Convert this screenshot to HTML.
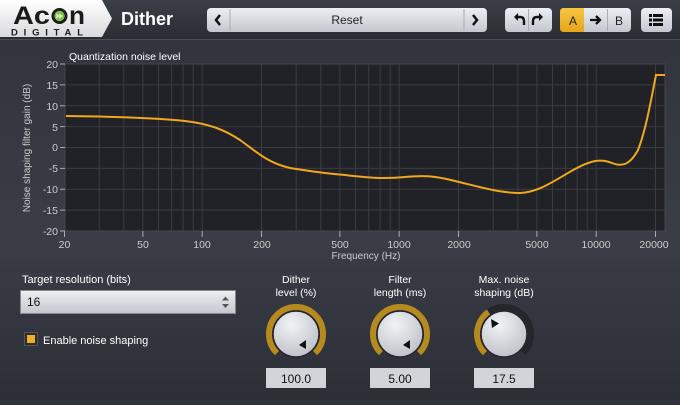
<!DOCTYPE html>
<html><head><meta charset="utf-8"><style>
body{margin:0;width:680px;height:400px;overflow:hidden;font-family:"Liberation Sans",sans-serif;background:linear-gradient(#30333b,#3a3d46 60%,#2c2f36);}
svg text{font-family:"Liberation Sans",sans-serif;}
</style></head><body>
<svg width="680" height="400" xmlns="http://www.w3.org/2000/svg">
<defs>
<linearGradient id="hdr" x1="0" y1="0" x2="0" y2="1"><stop offset="0" stop-color="#3b3e46"/><stop offset="1" stop-color="#2a2d34"/></linearGradient>
<linearGradient id="btn" x1="0" y1="0" x2="0" y2="1"><stop offset="0" stop-color="#eceef2"/><stop offset="1" stop-color="#c4c7ce"/></linearGradient>
<linearGradient id="gold" x1="0" y1="0" x2="0" y2="1"><stop offset="0" stop-color="#f7c542"/><stop offset="1" stop-color="#e6a51c"/></linearGradient>
<radialGradient id="knob" cx="0.4" cy="0.3" r="0.8"><stop offset="0" stop-color="#f2f3f6"/><stop offset="1" stop-color="#b9bcc4"/></radialGradient>
<linearGradient id="logo" x1="0" y1="0" x2="0" y2="1"><stop offset="0" stop-color="#ffffff"/><stop offset="1" stop-color="#d9dadc"/></linearGradient>
</defs>
<rect x="0" y="0" width="680" height="39" fill="url(#hdr)"/>
<rect x="0" y="39" width="680" height="1" fill="#4a4d55"/>
<path d="M0 0H102L112 18.5L102 37H0Z" fill="url(#logo)"/>
<text x="13" y="24" font-size="25" font-weight="bold" fill="#1b1b1b" textLength="37" lengthAdjust="spacingAndGlyphs">Ac</text>
<circle cx="59.5" cy="16" r="8" fill="#1b1b1b"/><circle cx="59.5" cy="16" r="5.2" fill="#7cc242"/>
<path d="M56.5 13.5L59.5 16L56.5 18.5ZM59.5 13.5L62.5 16L59.5 18.5Z" fill="#fff"/>
<text x="69" y="24" font-size="25" font-weight="bold" fill="#1b1b1b" textLength="16" lengthAdjust="spacingAndGlyphs">n</text>
<text x="11" y="35.5" font-size="9.5" font-weight="bold" fill="#1b1b1b" textLength="72" lengthAdjust="spacing">DIGITAL</text>
<text x="121" y="25" font-size="18" font-weight="bold" fill="#fff">Dither</text>
<rect x="207" y="8" width="280" height="24" rx="4" fill="url(#btn)"/>
<line x1="230" y1="9" x2="230" y2="31" stroke="#a9acb3"/><line x1="464" y1="9" x2="464" y2="31" stroke="#a9acb3"/>
<path d="M220 15L216 20L220 25" stroke="#111" stroke-width="2.5" fill="none"/>
<path d="M473 15L477 20L473 25" stroke="#111" stroke-width="2.5" fill="none"/>
<text x="347" y="24" font-size="12" fill="#222" text-anchor="middle">Reset</text>
<rect x="505" y="8" width="47" height="24" rx="4" fill="url(#btn)"/>
<line x1="528.5" y1="9" x2="528.5" y2="31" stroke="#a9acb3"/>
<path d="M514 17L518 13V21Z" fill="#111"/><path d="M516 17H520Q524 17 524 21V25" stroke="#111" stroke-width="2.4" fill="none"/>
<path d="M543 17L539 13V21Z" fill="#111"/><path d="M541 17H537Q533 17 533 21V25" stroke="#111" stroke-width="2.4" fill="none"/>
<rect x="560" y="8" width="71" height="24" rx="4" fill="url(#btn)"/>
<path d="M564 8H584V32H564Q560 32 560 28V12Q560 8 564 8Z" fill="url(#gold)"/>
<line x1="607.5" y1="9" x2="607.5" y2="31" stroke="#a9acb3"/>
<text x="573" y="25" font-size="12" fill="#222" text-anchor="middle">A</text>
<path d="M590 20H600M596 16L600 20L596 24" stroke="#111" stroke-width="2.3" fill="none"/>
<text x="619" y="25" font-size="12" fill="#222" text-anchor="middle">B</text>
<rect x="641" y="8" width="31" height="24" rx="4" fill="url(#btn)"/>
<g fill="#111"><rect x="649" y="14" width="3" height="3"/><rect x="653" y="14" width="10" height="3"/><rect x="649" y="18.5" width="3" height="3"/><rect x="653" y="18.5" width="10" height="3"/><rect x="649" y="23" width="3" height="3"/><rect x="653" y="23" width="10" height="3"/></g>

<text x="69" y="60" font-size="10.5" fill="#fff">Quantization noise level</text>
<rect x="65" y="64" width="600" height="167" fill="#212227" stroke="#45474e"/>
<g stroke="#3b3d43" stroke-width="1">
<path d="M65 84.9H665M65 105.8H665M65 126.6H665M65 147.5H665M65 168.4H665M65 189.3H665M65 210.1H665"/>
<path d="M99.2 64V231M123.8 64V231M142.9 64V231M158.5 64V231M171.7 64V231M183.1 64V231M193.2 64V231M202.2 64V231M261.5 64V231M296.2 64V231M320.8 64V231M339.9 64V231M355.5 64V231M368.7 64V231M380.1 64V231M390.2 64V231M399.2 64V231M458.5 64V231M493.2 64V231M517.8 64V231M536.9 64V231M552.5 64V231M565.7 64V231M577.1 64V231M587.2 64V231M596.2 64V231M655.5 64V231"/>
</g>
<g stroke="#aaa"><path d="M60 64H65M60 84.9H65M60 105.8H65M60 126.6H65M60 147.5H65M60 168.4H65M60 189.3H65M60 210.1H65M60 231H65"/>
<path d="M64.5 231V237M142.9 231V237M202.2 231V237M261.5 231V237M339.9 231V237M399.2 231V237M458.5 231V237M536.9 231V237M596.2 231V237M655.5 231V237"/></g>
<g font-size="10.5" fill="#ccc" text-anchor="end">
<text x="58" y="68">20</text><text x="58" y="89">15</text><text x="58" y="110">10</text><text x="58" y="131">5</text><text x="58" y="151">0</text><text x="58" y="172">-5</text><text x="58" y="193">-10</text><text x="58" y="214">-15</text><text x="58" y="235">-20</text></g>
<g font-size="10.5" fill="#ccc" text-anchor="middle">
<text x="64.5" y="248">20</text><text x="143" y="248">50</text><text x="202" y="248">100</text><text x="262" y="248">200</text><text x="340" y="248">500</text><text x="399" y="248">1000</text><text x="459" y="248">2000</text><text x="537" y="248">5000</text><text x="596" y="248">10000</text><text x="654" y="248">20000</text>
<text x="366" y="259" font-size="10">Frequency (Hz)</text></g>
<text transform="translate(30,148) rotate(-90)" font-size="10" fill="#ccc" text-anchor="middle">Noise shaping filter gain (dB)</text>
<path d="M66 116C110 116.5 150 117.5 185 121C210 124 225 130 240 140C258 153 268 163 290 168C310 171 320 173 345 175C370 178 385 179 405 177C425 175 435 176 455 181C480 187 500 193 520 193C540 192 555 180 575 169C590 161 600 158 612 163C622 167 630 165 638 150C646 130 652 95 656 75H665" stroke="#f0a81c" stroke-width="2" fill="none"/>

<text x="22" y="283" font-size="11" fill="#fff">Target resolution (bits)</text>
<rect x="20.5" y="290.5" width="215" height="23" fill="url(#btn)" stroke="#888"/>
<text x="27" y="306" font-size="12" fill="#111">16</text>
<path d="M222 300.5L225.5 296.5L229 300.5ZM222 304L225.5 308L229 304Z" fill="#555"/>
<rect x="24.5" y="332.5" width="13" height="13" fill="#2a2c31" stroke="#555"/>
<rect x="27" y="335" width="8" height="8" fill="#f0b025"/>
<text x="43" y="344" font-size="11" fill="#fff">Enable noise shaping</text>

<g font-size="10.5" fill="#fff" text-anchor="middle">
<text x="296" y="283">Dither</text><text x="296" y="296">level (%)</text>
<text x="400" y="283">Filter</text><text x="400" y="296">length (ms)</text>
<text x="504" y="283">Max. noise</text><text x="504" y="296">shaping (dB)</text></g>

<path d="M276.9 353.1A27 27 0 1 1 315.1 353.1" stroke="#b58a1f" stroke-width="6" fill="none"/>
<circle cx="296" cy="334" r="23" fill="url(#knob)" stroke="#24262b" stroke-width="1.5"/>
<path d="M306 340L306 349L299 345Z" fill="#111"/>
<path d="M380.9 353.1A27 27 0 1 1 419.1 353.1" stroke="#b58a1f" stroke-width="6" fill="none"/>
<circle cx="400" cy="334" r="23" fill="url(#knob)" stroke="#24262b" stroke-width="1.5"/>
<path d="M410 340L410 349L403 345Z" fill="#111"/>
<path d="M484.9 353.1A27 27 0 1 1 523.1 353.1" stroke="#24262b" stroke-width="6" fill="none"/>
<path d="M484.9 353.1A27 27 0 0 1 488.5 311.9" stroke="#b58a1f" stroke-width="6" fill="none"/>
<circle cx="504" cy="334" r="23" fill="url(#knob)" stroke="#24262b" stroke-width="1.5"/>
<path d="M491 319L499 323.5L492 328Z" fill="#111"/>

<rect x="266" y="368" width="60" height="20" fill="#d2d4da"/><text x="296" y="383" font-size="12" fill="#111" text-anchor="middle">100.0</text>
<rect x="370" y="368" width="60" height="20" fill="#d2d4da"/><text x="400" y="383" font-size="12" fill="#111" text-anchor="middle">5.00</text>
<rect x="474" y="368" width="60" height="20" fill="#d2d4da"/><text x="504" y="383" font-size="12" fill="#111" text-anchor="middle">17.5</text>
</svg>
</body></html>
